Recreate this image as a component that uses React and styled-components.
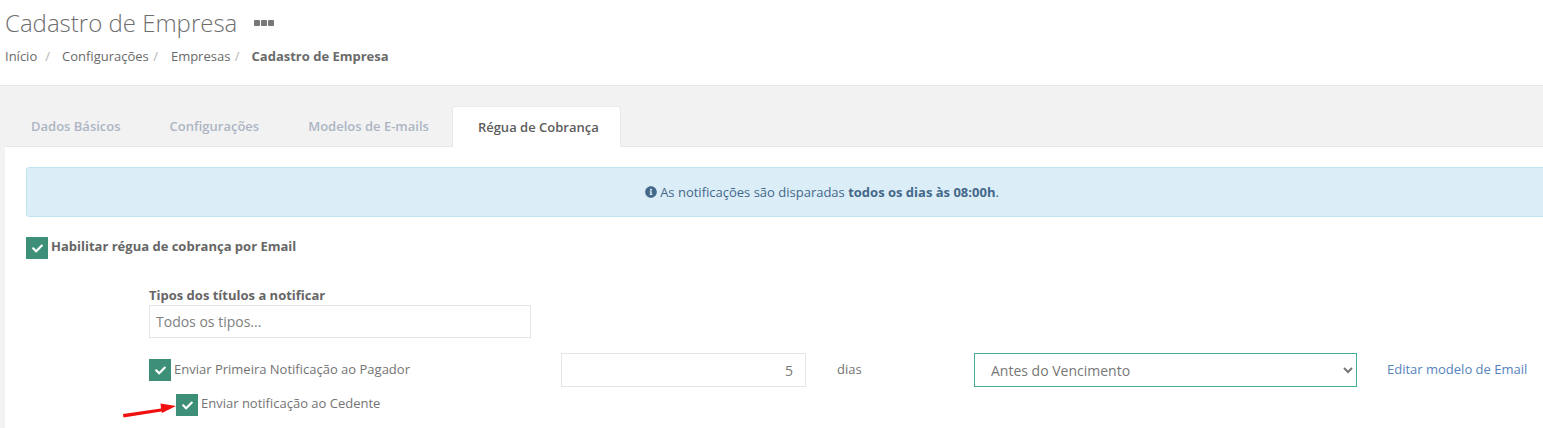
import React from 'react'
import styled, { createGlobalStyle } from 'styled-components'
import { FaCheck, FaInfoCircle } from 'react-icons/fa'

const GlobalStyle = createGlobalStyle`
  html, body {
    margin: 0;
    padding: 0;
    height: 428px;
    overflow: hidden;
    background: #f2f2f2;
  }
  body {
    font-family: "Open Sans", "Liberation Sans", sans-serif;
    font-size: 13px;
    color: #6a6a6a;
  }
  * {
    box-sizing: border-box;
  }
`

const Page = styled.div`
  width: 1543px;
  height: 428px;
  overflow: hidden;
`

const Header = styled.header`
  height: 86px;
  padding: 6px 0 0 5px;
  background: #fff;
  border-bottom: 1px solid #e7e7e7;
`

const TitleRow = styled.div`
  display: flex;
  align-items: center;
  gap: 17px;
  height: 33px;
`

const Title = styled.h1`
  margin: 0;
  font-size: 24px;
  line-height: 33px;
  font-weight: 300;
  color: #6e6e6e;
`

const Dots = styled.span`
  display: flex;
  gap: 1px;
  margin-top: 1px;
`

const Dot = styled.i`
  width: 6px;
  height: 6px;
  border-radius: 1px;
  background: #777;
`

const Breadcrumb = styled.nav`
  display: flex;
  margin-top: 8px;
  line-height: 18px;
  color: #6a6a6a;
`

const Crumb = styled.span`
  margin-left: ${({ $left }) => $left}px;
  margin-right: ${({ $right }) => $right}px;
  font-weight: ${({ $current }) => ($current ? 700 : 400)};
  white-space: pre;
`

const Slash = styled.span`
  color: #b5b5b5;
`

const Tabs = styled.div`
  display: flex;
  align-items: flex-end;
  height: 61px;
  padding-left: 5px;
`

const Tab = styled.div`
  height: 41px;
  margin-right: ${({ $active }) => ($active ? 0 : -3)}px;
  padding: ${({ $active }) => ($active ? '0 21px 0 25px' : '0 26px')};
  line-height: 40px;
  font-weight: 600;
  color: ${({ $active }) => ($active ? '#5c5c5c' : '#adb5c4')};
  background: ${({ $active }) => ($active ? '#fff' : 'transparent')};
  border: ${({ $active }) => ($active ? '1px solid #e9e9e9' : 'none')};
  border-bottom: none;
  border-radius: 3px 3px 0 0;
  position: relative;
  z-index: 1;
`

const Content = styled.main`
  width: 1700px;
  height: 300px;
  margin: -1px 0 0 5px;
  padding: 20px 0 0 21px;
  background: #fff;
  border-top: 1px solid #e7e7e7;
`

const Alert = styled.div`
  display: flex;
  align-items: center;
  justify-content: center;
  gap: 3px;
  width: 1592px;
  height: 50px;
  background: #dbedf7;
  border: 1px solid #bfe3ef;
  border-radius: 3px;
  color: #44688a;
`

const AlertText = styled.span`
  b {
    font-weight: 700;
  }
`

const CheckRow = styled.label`
  display: flex;
  align-items: flex-start;
  gap: 3px;
  line-height: 18px;
  font-weight: ${({ $bold }) => ($bold ? 700 : 400)};
  color: ${({ $bold }) => ($bold ? '#666' : '#747474')};
`

const CheckBox = styled.span`
  display: flex;
  align-items: center;
  justify-content: center;
  flex: none;
  width: 22px;
  height: 22px;
  color: #fff;
  background: #3d8f78;
  font-size: 11px;
`

const CheckText = styled.span`
  margin-top: ${({ $top }) => $top}px;
`

const MainCheck = styled.div`
  margin-top: 20px;
`

const Rules = styled.section`
  width: 1517px;
  margin: 27px 0 0 123px;
`

const FieldLabel = styled.div`
  margin-bottom: 1px;
  font-weight: 700;
  line-height: 18px;
  color: #666;
`

const TextInput = styled.input`
  display: block;
  width: ${({ $width }) => $width}px;
  height: ${({ $height }) => $height}px;
  padding: 0 12px 0 6px;
  font: 14px "Open Sans", "Liberation Sans", sans-serif;
  text-align: ${({ $align }) => $align || 'left'};
  color: #777;
  background: #fff;
  border: 1px solid #e5e5e5;
  outline: none;

  &::placeholder {
    color: #808080;
    opacity: 1;
  }
`

const NotifyRow = styled.div`
  display: grid;
  grid-template-columns: 412px 245px 168px 383px auto;
  align-items: center;
  margin-top: 15px;
`

const Days = styled.span`
  padding-left: 31px;
  margin-top: -2px;
  color: #747474;
`

const Select = styled.select`
  width: 383px;
  height: 34px;
  padding-left: 12px;
  font: 14px "Open Sans", "Liberation Sans", sans-serif;
  color: #777;
  background: #fff;
  border: 1px solid #3fae95;
  border-radius: 0;
  outline: none;
`

const EditLink = styled.a`
  padding-left: 30px;
  margin-top: -2px;
  color: #5583bb;
  text-decoration: none;
  white-space: nowrap;
`

const SubCheck = styled.div`
  position: relative;
  margin: 7px 0 0 27px;
`

const Arrow = styled.svg`
  position: absolute;
  left: -54px;
  top: 8px;
`

const Check = ({ bold, top = 0, children }) => (
  <CheckRow $bold={bold}>
    <CheckBox>
      <FaCheck />
    </CheckBox>
    <CheckText $top={top}>{children}</CheckText>
  </CheckRow>
)

const App = () => (
  <Page>
    <GlobalStyle />
    <Header>
      <TitleRow>
        <Title>Cadastro de Empresa</Title>
        <Dots>
          <Dot />
          <Dot />
          <Dot />
        </Dots>
      </TitleRow>
      <Breadcrumb>
        <Crumb $left={0} $right={8}>Início</Crumb>
        <Slash>/</Slash>
        <Crumb $left={12} $right={1}>Configurações </Crumb>
        <Slash>/</Slash>
        <Crumb $left={13} $right={1}>Empresas </Crumb>
        <Slash>/</Slash>
        <Crumb $current $left={12} $right={0}>Cadastro de Empresa</Crumb>
      </Breadcrumb>
    </Header>
    <Tabs>
      <Tab>Dados Básicos</Tab>
      <Tab>Configurações</Tab>
      <Tab>Modelos de E-mails</Tab>
      <Tab $active>Régua de Cobrança</Tab>
    </Tabs>
    <Content>
      <Alert>
        <FaInfoCircle size={12} />
        <AlertText>
          As notificações são disparadas <b>todos os dias às 08:00h</b>.
        </AlertText>
      </Alert>
      <MainCheck>
        <Check bold>Habilitar régua de cobrança por Email</Check>
      </MainCheck>
      <Rules>
        <FieldLabel>Tipos dos títulos a notificar</FieldLabel>
        <TextInput $width={382} $height={33} placeholder="Todos os tipos..." />
        <NotifyRow>
          <Check top={1}>Enviar Primeira Notificação ao Pagador</Check>
          <TextInput $width={245} $height={34} $align="right" defaultValue="5" readOnly />
          <Days>dias</Days>
          <Select defaultValue="antes">
            <option value="antes">Antes do Vencimento</option>
            <option value="depois">Depois do Vencimento</option>
          </Select>
          <EditLink href="#">Editar modelo de Email</EditLink>
        </NotifyRow>
        <SubCheck>
          <Arrow width="54" height="22" viewBox="0 0 54 22">
            <path d="M1 12 L39 6.6 L38.5 1.5 L54 4 L40 11 L39.5 9.4 L1.5 15.4 Z" fill="#f01010" />
          </Arrow>
          <Check>Enviar notificação ao Cedente</Check>
        </SubCheck>
      </Rules>
    </Content>
  </Page>
)

export default App
